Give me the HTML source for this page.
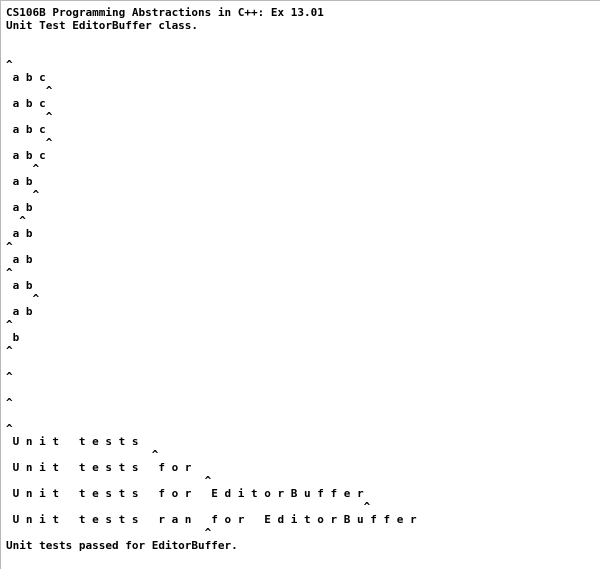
<!DOCTYPE html>
<html><head><style>
html,body{margin:0;padding:0;background:#fff;}
body{width:600px;height:569px;overflow:hidden;box-sizing:border-box;border-top:1px solid #b8b8b8;border-left:1px solid #b8b8b8;}
pre{margin:0;padding:5px 0 0 5px;font-family:"DejaVu Sans Mono","Liberation Mono",monospace;font-weight:bold;font-size:11px;line-height:13px;color:#000;}
</style></head><body><pre>CS106B Programming Abstractions in C++: Ex 13.01
Unit Test EditorBuffer class.


^
 a b c
      ^
 a b c
      ^
 a b c
      ^
 a b c
    ^
 a b
    ^
 a b
  ^
 a b
^
 a b
^
 a b
    ^
 a b
^
 b
^

^

^

^
 U n i t   t e s t s
                      ^
 U n i t   t e s t s   f o r
                              ^
 U n i t   t e s t s   f o r   E d i t o r B u f f e r
                                                      ^
 U n i t   t e s t s   r a n   f o r   E d i t o r B u f f e r
                              ^
Unit tests passed for EditorBuffer.
</pre></body></html>
